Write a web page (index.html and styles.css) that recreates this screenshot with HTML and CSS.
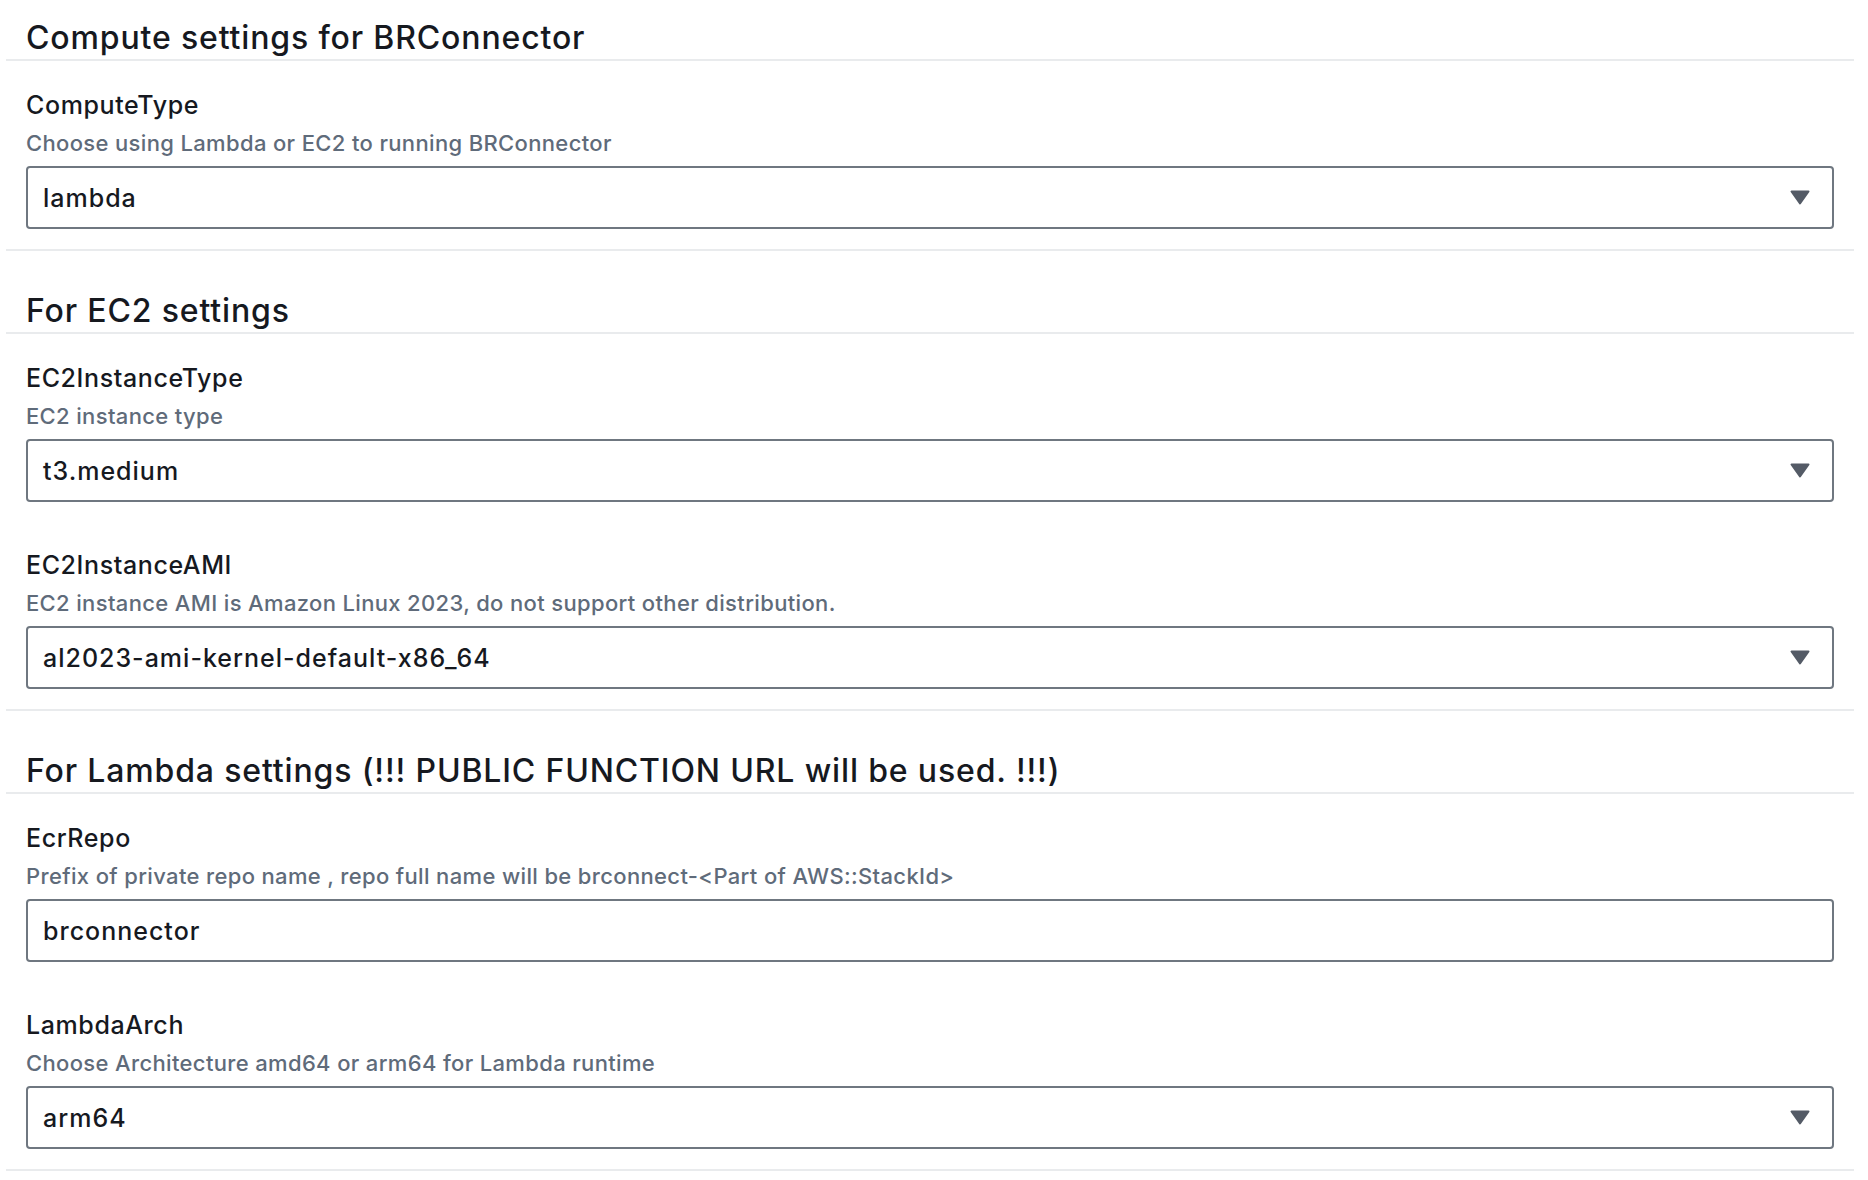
FILE: index.html
```html
<!DOCTYPE html>
<html lang="en">
<head>
<meta charset="utf-8">
<title>Compute settings for BRConnector</title>
<link rel="stylesheet" href="styles.css">
</head>
<body>
<div class="page">
  <section class="section first">
    <div class="section-header"><h2>Compute settings for BRConnector</h2></div>
    <div class="fields">
      <div class="field">
        <div class="label">ComputeType</div>
        <div class="desc">Choose using Lambda or EC2 to running BRConnector</div>
        <div class="control select"><span class="value">lambda</span><svg class="caret" width="20" height="15" viewBox="0 0 20 15"><path d="M1.5 1.5 H18.5 L10 13.5 Z" fill="#545b66" stroke="#545b66" stroke-width="2" stroke-linejoin="round"/></svg></div>
      </div>
    </div>
  </section>

  <section class="section">
    <div class="section-header"><h2>For EC2 settings</h2></div>
    <div class="fields">
      <div class="field">
        <div class="label">EC2InstanceType</div>
        <div class="desc">EC2 instance type</div>
        <div class="control select"><span class="value">t3.medium</span><svg class="caret" width="20" height="15" viewBox="0 0 20 15"><path d="M1.5 1.5 H18.5 L10 13.5 Z" fill="#545b66" stroke="#545b66" stroke-width="2" stroke-linejoin="round"/></svg></div>
      </div>
      <div class="field">
        <div class="label">EC2InstanceAMI</div>
        <div class="desc">EC2 instance AMI is Amazon Linux 2023, do not support other distribution.</div>
        <div class="control select"><span class="value">al2023-ami-kernel-default-x86_64</span><svg class="caret" width="20" height="15" viewBox="0 0 20 15"><path d="M1.5 1.5 H18.5 L10 13.5 Z" fill="#545b66" stroke="#545b66" stroke-width="2" stroke-linejoin="round"/></svg></div>
      </div>
    </div>
  </section>

  <section class="section">
    <div class="section-header"><h2>For Lambda settings (!!! PUBLIC FUNCTION URL will be used. !!!)</h2></div>
    <div class="fields">
      <div class="field">
        <div class="label">EcrRepo</div>
        <div class="desc">Prefix of private repo name , repo full name will be brconnect-&lt;Part of AWS::StackId&gt;</div>
        <div class="control"><span class="value">brconnector</span></div>
      </div>
      <div class="field">
        <div class="label">LambdaArch</div>
        <div class="desc">Choose Architecture amd64 or arm64 for Lambda runtime</div>
        <div class="control select"><span class="value">arm64</span><svg class="caret" width="20" height="15" viewBox="0 0 20 15"><path d="M1.5 1.5 H18.5 L10 13.5 Z" fill="#545b66" stroke="#545b66" stroke-width="2" stroke-linejoin="round"/></svg></div>
      </div>
    </div>
  </section>
</div>
</body>
</html>
```

FILE: styles.css
```css
* { box-sizing: border-box; }

html, body {
  margin: 0;
  padding: 0;
  background: #ffffff;
}

body {
  font-family: Inter, "Open Sans", "Liberation Sans", sans-serif;
  color: #16191f;
}

.page {
  width: 1848px;
  margin-left: 6px;
}

.section {
  border-bottom: 2px solid #e9ebed;
  padding-bottom: 20px;
  margin-top: 40px;
}

.section.first {
  margin-top: 0;
  padding-top: 18px;
}

.section-header {
  padding: 0 20px 1px 20px;
  border-bottom: 2px solid #e9ebed;
}

.section-header h2 {
  margin: 0;
  font-size: 32px;
  line-height: 40px;
  font-weight: 500;
  letter-spacing: 0.85px;
  color: #16191f;
}

.fields {
  padding: 28px 20px 0 20px;
  display: flex;
  flex-direction: column;
  gap: 47px;
}

.label {
  font-size: 25px;
  line-height: 32px;
  font-weight: 500;
  letter-spacing: 0.6px;
  color: #16191f;
}

.desc {
  margin-top: 8px;
  font-size: 22px;
  line-height: 28px;
  font-weight: 500;
  letter-spacing: 0.35px;
  color: #5f6b7a;
}

.control {
  margin-top: 9px;
  height: 63px;
  border: 2px solid #6f7780;
  border-radius: 4px;
  padding: 0 22px 0 15px;
  display: flex;
  align-items: center;
  justify-content: space-between;
}

.value {
  font-size: 25px;
  line-height: 32px;
  font-weight: 500;
  letter-spacing: 1px;
  color: #16191f;
}

.caret {
  display: block;
  flex: none;
}
```
